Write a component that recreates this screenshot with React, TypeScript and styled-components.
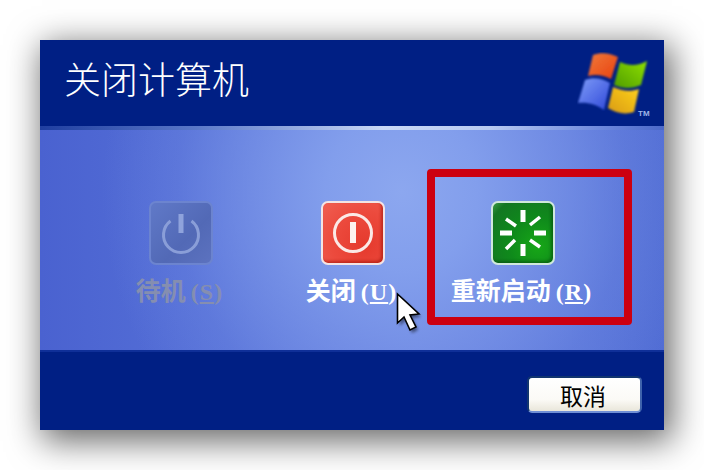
import React from "react";
import styled, { createGlobalStyle } from "styled-components";

const Global = createGlobalStyle`
  html, body { margin: 0; padding: 0; background: #fff; }
  body { width: 704px; height: 470px; overflow: hidden; position: relative; }
`;

const Stage = styled.div`
  position: relative;
  width: 704px;
  height: 470px;
  padding: 40px;
  box-sizing: border-box;
  font-family: "Noto Sans CJK SC", "Liberation Sans", sans-serif;
`;

const Dialog = styled.div`
  width: 624px;
  height: 390px;
  display: flex;
  flex-direction: column;
  background: #001f84;
  box-shadow: 5px 8px 32px 3px rgba(0, 0, 0, 0.6);
`;

const Header = styled.header`
  height: 86px;
  flex: none;
  display: flex;
  align-items: flex-start;
  justify-content: space-between;
  padding: 0 9px 0 24px;
  box-sizing: border-box;
  background: #001f84;
`;

const Title = styled.h1`
  margin: 16px 0 0;
  font-size: 37px;
  line-height: 44px;
  font-weight: 300;
  color: #fff;
`;

const LogoBox = styled.div`
  margin-top: 12px;
  width: 78px;
  height: 66px;
`;

const Rule = styled.div`
  height: 4px;
  flex: none;
  background: linear-gradient(90deg, #1f3ea0 0%, #5a78c8 25%, #c9d8f6 55%, #b8caf2 72%, #6d88dc 90%, #4b68c8 100%);
`;

const Body = styled.main`
  height: 220px;
  flex: none;
  box-sizing: border-box;
  padding: 71px 0 0 55px;
  display: grid;
  grid-template-columns: 172px 172px 168px;
  align-content: start;
  background:
    radial-gradient(
      ellipse 300px 320px at 58% 28%,
      #8ca7ef 0%,
      rgba(132, 160, 237, 0.95) 25%,
      rgba(124, 151, 233, 0.7) 50%,
      rgba(116, 142, 229, 0.3) 75%,
      rgba(110, 136, 226, 0) 100%
    ),
    linear-gradient(90deg, #4a62d0 0%, #5671d8 30%, #6580e0 60%, #5a76da 85%, #516dd4 100%);
`;

const Option = styled.div`
  display: flex;
  flex-direction: column;
  align-items: center;
`;

const Tile = styled.div<{ $kind: "off" | "red" | "green" }>`
  width: 64px;
  height: 64px;
  box-sizing: border-box;
  border-radius: 7px;
  display: flex;
  align-items: center;
  justify-content: center;
  border: 2px solid ${(p) => (p.$kind === "off" ? "#6c84cf" : p.$kind === "red" ? "#f3e4e4" : "#cfe8dc")};
  background: ${(p) =>
    p.$kind === "off"
      ? "linear-gradient(135deg, #6079c8 0%, #5269b6 60%, #5c72bf 100%)"
      : p.$kind === "red"
        ? "radial-gradient(circle at 70% 70%, #e53a2d 0%, #ec4a3d 55%, #f05f52 100%)"
        : "radial-gradient(circle at 75% 72%, #17a717 0%, #0f8a1b 45%, #137722 85%, #3c9a48 100%)"};
  box-shadow: ${(p) =>
    p.$kind === "off"
      ? "none"
      : p.$kind === "red"
        ? "inset -2px -2px 3px rgba(160, 20, 10, .6)"
        : "inset -2px -2px 3px rgba(0, 60, 10, .5)"};
`;

const Label = styled.div<{ $off?: boolean }>`
  margin: 9px 3px 0 0;
  font-size: 25px;
  line-height: 30px;
  font-weight: 700;
  white-space: nowrap;
  color: ${(p) => (p.$off ? "#858eb0" : "#fff")};
`;

const Key = styled.span`
  font-family: "Liberation Serif", serif;
  font-size: 24px;
  font-weight: 700;
  margin-left: 5px;
  letter-spacing: 1px;
  & u { text-underline-offset: 2px; }
`;

const Footer = styled.footer`
  flex: 1;
  display: flex;
  justify-content: flex-end;
  align-items: flex-start;
  padding: 24px 22px 0 0;
  border-top: 2px solid #0f2f98;
  background: #001f84;
`;

const CancelButton = styled.button`
  width: 115px;
  height: 37px;
  padding: 0 3px 0 0;
  box-sizing: border-box;
  border: 2px solid #11356f;
  border-bottom-color: #6f8fd6;
  border-right-color: #3f63ac;
  border-radius: 5px;
  background: linear-gradient(180deg, #ffffff 0%, #fbfaf6 65%, #e9e6da 100%);
  font-family: "Noto Sans CJK SC", sans-serif;
  font-size: 23px;
  line-height: 30px;
  color: #000;
`;

const Highlight = styled.div`
  position: absolute;
  left: 427px;
  top: 169px;
  width: 205px;
  height: 156px;
  box-sizing: border-box;
  border: 8px solid #cc0010;
  border-radius: 4px;
`;

const Cursor = styled.svg`
  position: absolute;
  left: 392px;
  top: 289px;
`;

const WinLogo = () => (
  <svg width="78" height="66" viewBox="0 0 78 66">
    <defs>
      <filter id="soft" x="-10%" y="-10%" width="120%" height="120%">
        <feGaussianBlur stdDeviation="0.8" />
      </filter>
      <linearGradient id="lr" x1="0" y1="0" x2="1" y2="1">
        <stop offset="0" stopColor="#f07a3a" />
        <stop offset="1" stopColor="#e8400f" />
      </linearGradient>
      <linearGradient id="lg" x1="1" y1="0" x2="0" y2="1">
        <stop offset="0" stopColor="#8fe000" />
        <stop offset="1" stopColor="#4f9c06" />
      </linearGradient>
      <linearGradient id="lb" x1="0" y1="0" x2="1" y2="1">
        <stop offset="0" stopColor="#7f9cf8" />
        <stop offset="1" stopColor="#2f48d8" />
      </linearGradient>
      <linearGradient id="ly" x1="1" y1="0" x2="0" y2="1">
        <stop offset="0" stopColor="#ffd21e" />
        <stop offset="1" stopColor="#d89a10" />
      </linearGradient>
    </defs>
    <g filter="url(#soft)" transform="translate(2 0)">
      <path d="M14 3 C22 0 31 1 39 5 L32 27 C24 23 17 22 9 24 Z" fill="url(#lr)" />
      <path d="M41 10 C50 14 59 14 68 9 L62 33 C53 37 44 37 35 33 Z" fill="url(#lg)" />
      <path d="M6 28 C14 25 23 26 31 31 L25 58 C17 52 8 50 -1 51 Z" fill="url(#lb)" />
      <path d="M34 35 C43 39 51 40 60 37 L55 60 C46 63 37 61 29 56 Z" fill="url(#ly)" />
    </g>
    <text x="61" y="64" fontFamily="Liberation Sans, sans-serif" fontSize="8" fontWeight="700" fill="#9fb4e8">TM</text>
  </svg>
);

const StandbyIcon = () => (
  <svg width="60" height="60" viewBox="0 0 60 60">
    <path d="M19.5 18 A 17.5 17.5 0 1 0 40.5 18" fill="none" stroke="#8a9ed8" strokeWidth="3" />
    <rect x="27.5" y="11" width="5" height="19" fill="#8fa3dc" />
  </svg>
);

const PowerIcon = () => (
  <svg width="60" height="60" viewBox="0 0 60 60">
    <circle cx="30" cy="30" r="18.5" fill="none" stroke="#fbe9e6" strokeWidth="3" />
    <rect x="27" y="19" width="6" height="21" fill="#fdf2ef" />
  </svg>
);

const RestartIcon = () => (
  <svg width="60" height="60" viewBox="0 0 60 60" stroke="#ffffff" fill="none">
    <path d="M30 7 V19 M30 41 V53 M7 30 H19 M41 30 H53" strokeWidth="5" />
    <path d="M13 16 L23 23 M47 44 L37 37 M47 14 L37 22 M13 46 L22 37" strokeWidth="3.5" />
  </svg>
);

const CursorIcon = () => (
  <Cursor width="36" height="52" viewBox="0 0 36 52">
    <defs>
      <filter id="cshadow" x="-30%" y="-30%" width="160%" height="160%">
        <feGaussianBlur stdDeviation="1.6" />
      </filter>
    </defs>
    <path d="M8 8 V37 L14 31 L20 44 L26 41 L20 29 L29 28 Z" fill="#000" opacity=".45" filter="url(#cshadow)" />
    <path d="M5.5 5 V34 L12 28 L18 41 L24 38 L18 26 L27 25 Z" fill="#fff" stroke="#000" strokeWidth="1.6" strokeLinejoin="miter" />
  </Cursor>
);

export default function App() {
  return (
    <Stage>
      <Global />
      <Dialog>
        <Header>
          <Title>关闭计算机</Title>
          <LogoBox>
            <WinLogo />
          </LogoBox>
        </Header>
        <Rule />
        <Body>
          <Option>
            <Tile $kind="off">
              <StandbyIcon />
            </Tile>
            <Label $off>
              待机<Key>(<u>S</u>)</Key>
            </Label>
          </Option>
          <Option>
            <Tile $kind="red">
              <PowerIcon />
            </Tile>
            <Label>
              关闭<Key>(<u>U</u>)</Key>
            </Label>
          </Option>
          <Option>
            <Tile $kind="green">
              <RestartIcon />
            </Tile>
            <Label>
              重新启动<Key>(<u>R</u>)</Key>
            </Label>
          </Option>
        </Body>
        <Footer>
          <CancelButton>取消</CancelButton>
        </Footer>
      </Dialog>
      <Highlight />
      <CursorIcon />
    </Stage>
  );
}
